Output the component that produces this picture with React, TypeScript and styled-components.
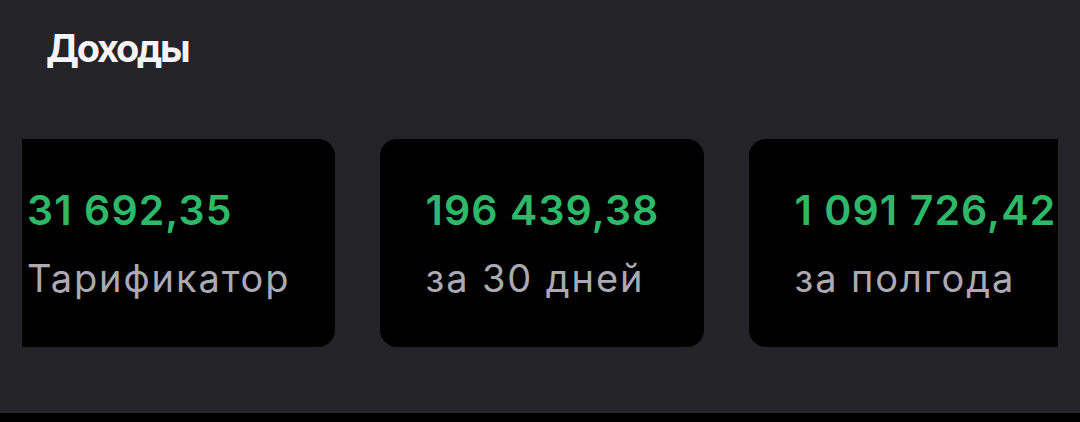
import React from "react";
import styled, { createGlobalStyle } from "styled-components";

const Global = createGlobalStyle`
  html, body { margin: 0; padding: 0; background: #000; }
  body { font-family: Inter, "Noto Sans", sans-serif; }
`;

const Screen = styled.div`
  width: 1080px;
  height: 422px;
  display: flex;
  flex-direction: column;
  background: #000;
`;

const Panel = styled.section`
  height: 412px;
  background: #242328;
  display: flex;
  flex-direction: column;
  border-bottom: 1px solid #2c2b31;
`;

const Title = styled.h2`
  margin: 0;
  padding: 25px 0 0 46px;
  font-size: 38px;
  font-weight: 700;
  line-height: 46px;
  color: #f4f4f7;
  letter-spacing: -2.3px;
`;

const Viewport = styled.div`
  margin: 68px 22px 0 22px;
  overflow: hidden;
`;

const Track = styled.div`
  display: flex;
  gap: 45px;
  margin-left: -40px;
  width: max-content;
`;

const Card = styled.div`
  height: 208px;
  box-sizing: border-box;
  background: #000;
  border-radius: 17px;
  padding: 46px 45px 0;
  display: flex;
  flex-direction: column;
`;

const Amount = styled.div`
  font-size: 41px;
  font-weight: 600;
  line-height: 50px;
  color: #2db86a;
  letter-spacing: 1.1px;
  white-space: nowrap;
`;

const Caption = styled.div`
  font-size: 38px;
  font-weight: 400;
  line-height: 46px;
  color: #aaa9b4;
  letter-spacing: 1.9px;
  white-space: nowrap;
  margin-top: 20px;
`;

const items = [
  { amount: "31 692,35", caption: "Тарификатор" },
  { amount: "196 439,38", caption: "за 30 дней" },
  { amount: "1 091 726,42", caption: "за полгода" },
];

export default function App() {
  return (
    <Screen>
      <Global />
      <Panel>
        <Title>Доходы</Title>
        <Viewport>
          <Track>
            {items.map((it) => (
              <Card key={it.caption}>
                <Amount>{it.amount}</Amount>
                <Caption>{it.caption}</Caption>
              </Card>
            ))}
          </Track>
        </Viewport>
      </Panel>
    </Screen>
  );
}
